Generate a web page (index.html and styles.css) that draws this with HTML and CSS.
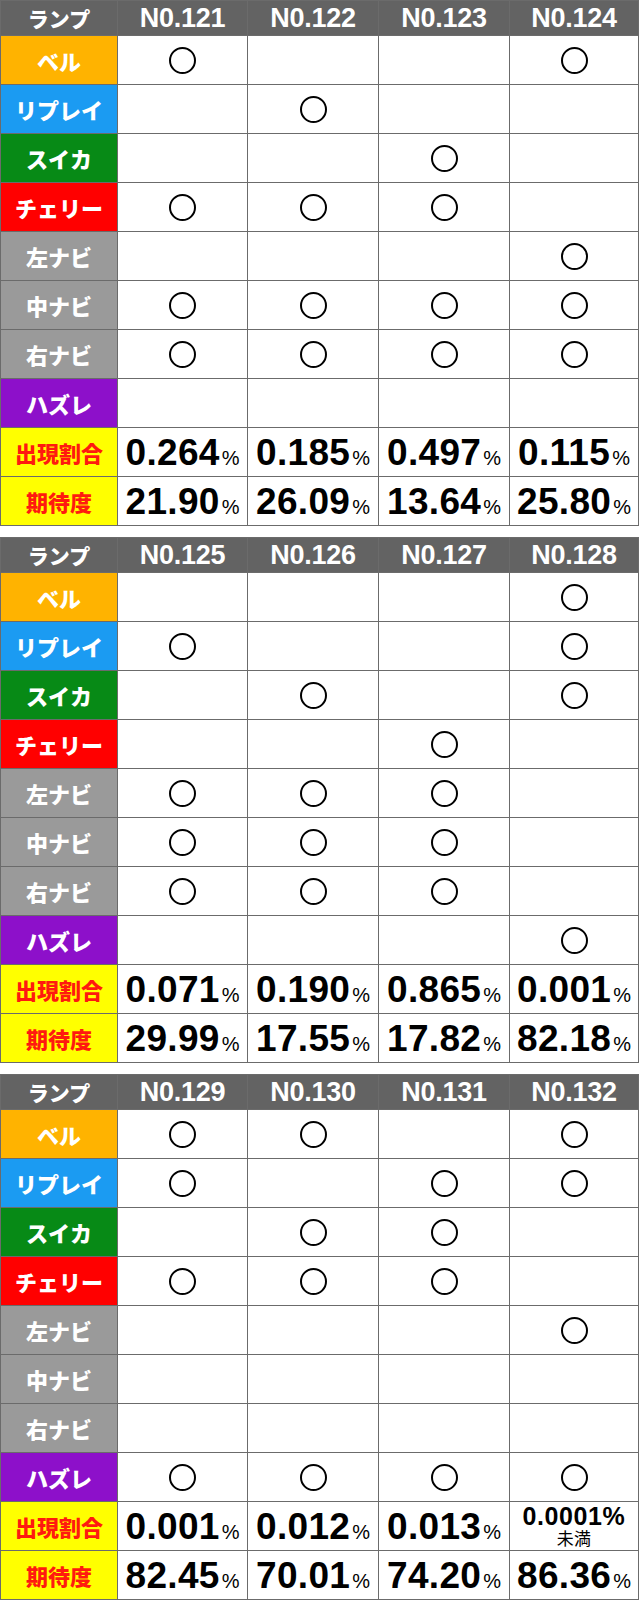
FILE: index.html
```html
<!DOCTYPE html>
<html lang="ja">
<head>
<meta charset="utf-8">
<title>ランプ</title>
<link rel="stylesheet" href="styles.css">
</head>
<body>
<table class="lamp">
  <colgroup><col class="c-label"><col class="c1"><col class="c2"><col class="c3"><col class="c4"></colgroup>
  <tr class="head"><td>ランプ</td><td>N0.121</td><td>N0.122</td><td>N0.123</td><td>N0.124</td></tr>
  <tr><td class="lb bell">ベル</td><td><span class="maru"></span></td><td></td><td></td><td><span class="maru"></span></td></tr>
  <tr><td class="lb replay">リプレイ</td><td></td><td><span class="maru"></span></td><td></td><td></td></tr>
  <tr><td class="lb suika">スイカ</td><td></td><td></td><td><span class="maru"></span></td><td></td></tr>
  <tr><td class="lb cherry">チェリー</td><td><span class="maru"></span></td><td><span class="maru"></span></td><td><span class="maru"></span></td><td></td></tr>
  <tr><td class="lb navi">左ナビ</td><td></td><td></td><td></td><td><span class="maru"></span></td></tr>
  <tr><td class="lb navi">中ナビ</td><td><span class="maru"></span></td><td><span class="maru"></span></td><td><span class="maru"></span></td><td><span class="maru"></span></td></tr>
  <tr><td class="lb navi">右ナビ</td><td><span class="maru"></span></td><td><span class="maru"></span></td><td><span class="maru"></span></td><td><span class="maru"></span></td></tr>
  <tr><td class="lb hazure">ハズレ</td><td></td><td></td><td></td><td></td></tr>
  <tr><td class="lb yellow">出現割合</td><td class="val">0.264<span class="pct">%</span></td><td class="val">0.185<span class="pct">%</span></td><td class="val">0.497<span class="pct">%</span></td><td class="val">0.115<span class="pct">%</span></td></tr>
  <tr><td class="lb yellow">期待度</td><td class="val">21.90<span class="pct">%</span></td><td class="val">26.09<span class="pct">%</span></td><td class="val">13.64<span class="pct">%</span></td><td class="val">25.80<span class="pct">%</span></td></tr>
</table>

<table class="lamp">
  <colgroup><col class="c-label"><col class="c1"><col class="c2"><col class="c3"><col class="c4"></colgroup>
  <tr class="head"><td>ランプ</td><td>N0.125</td><td>N0.126</td><td>N0.127</td><td>N0.128</td></tr>
  <tr><td class="lb bell">ベル</td><td></td><td></td><td></td><td><span class="maru"></span></td></tr>
  <tr><td class="lb replay">リプレイ</td><td><span class="maru"></span></td><td></td><td></td><td><span class="maru"></span></td></tr>
  <tr><td class="lb suika">スイカ</td><td></td><td><span class="maru"></span></td><td></td><td><span class="maru"></span></td></tr>
  <tr><td class="lb cherry">チェリー</td><td></td><td></td><td><span class="maru"></span></td><td></td></tr>
  <tr><td class="lb navi">左ナビ</td><td><span class="maru"></span></td><td><span class="maru"></span></td><td><span class="maru"></span></td><td></td></tr>
  <tr><td class="lb navi">中ナビ</td><td><span class="maru"></span></td><td><span class="maru"></span></td><td><span class="maru"></span></td><td></td></tr>
  <tr><td class="lb navi">右ナビ</td><td><span class="maru"></span></td><td><span class="maru"></span></td><td><span class="maru"></span></td><td></td></tr>
  <tr><td class="lb hazure">ハズレ</td><td></td><td></td><td></td><td><span class="maru"></span></td></tr>
  <tr><td class="lb yellow">出現割合</td><td class="val">0.071<span class="pct">%</span></td><td class="val">0.190<span class="pct">%</span></td><td class="val">0.865<span class="pct">%</span></td><td class="val">0.001<span class="pct">%</span></td></tr>
  <tr><td class="lb yellow">期待度</td><td class="val">29.99<span class="pct">%</span></td><td class="val">17.55<span class="pct">%</span></td><td class="val">17.82<span class="pct">%</span></td><td class="val">82.18<span class="pct">%</span></td></tr>
</table>

<table class="lamp">
  <colgroup><col class="c-label"><col class="c1"><col class="c2"><col class="c3"><col class="c4"></colgroup>
  <tr class="head"><td>ランプ</td><td>N0.129</td><td>N0.130</td><td>N0.131</td><td>N0.132</td></tr>
  <tr><td class="lb bell">ベル</td><td><span class="maru"></span></td><td><span class="maru"></span></td><td></td><td><span class="maru"></span></td></tr>
  <tr><td class="lb replay">リプレイ</td><td><span class="maru"></span></td><td></td><td><span class="maru"></span></td><td><span class="maru"></span></td></tr>
  <tr><td class="lb suika">スイカ</td><td></td><td><span class="maru"></span></td><td><span class="maru"></span></td><td></td></tr>
  <tr><td class="lb cherry">チェリー</td><td><span class="maru"></span></td><td><span class="maru"></span></td><td><span class="maru"></span></td><td></td></tr>
  <tr><td class="lb navi">左ナビ</td><td></td><td></td><td></td><td><span class="maru"></span></td></tr>
  <tr><td class="lb navi">中ナビ</td><td></td><td></td><td></td><td></td></tr>
  <tr><td class="lb navi">右ナビ</td><td></td><td></td><td></td><td></td></tr>
  <tr><td class="lb hazure">ハズレ</td><td><span class="maru"></span></td><td><span class="maru"></span></td><td><span class="maru"></span></td><td><span class="maru"></span></td></tr>
  <tr><td class="lb yellow">出現割合</td><td class="val">0.001<span class="pct">%</span></td><td class="val">0.012<span class="pct">%</span></td><td class="val">0.013<span class="pct">%</span></td><td class="val small"><span class="tiny">0.0001%</span><span class="miman">未満</span></td></tr>
  <tr><td class="lb yellow">期待度</td><td class="val">82.45<span class="pct">%</span></td><td class="val">70.01<span class="pct">%</span></td><td class="val">74.20<span class="pct">%</span></td><td class="val">86.36<span class="pct">%</span></td></tr>
</table>
</body>
</html>
```

FILE: styles.css
```css
html, body {
  margin: 0;
  padding: 0;
  background: #fff;
}

.lamp {
  width: 638px;
  border-collapse: collapse;
  table-layout: fixed;
  margin: 0 0 11px 0;
  font-family: "Liberation Sans", "Noto Sans CJK JP", sans-serif;
}

.c-label { width: 117px; }
.c1 { width: 130px; }
.c2 { width: 131px; }
.c3 { width: 131px; }
.c4 { width: 129px; }

.lamp td {
  border: 1px solid #6b6b6b;
  height: 48px;
  padding: 0;
  text-align: center;
  vertical-align: middle;
  line-height: 1;
}

.lamp tr.head td {
  height: 34px;
  background: #636363;
  color: #fff;
  font-weight: bold;
  font-size: 27px;
  letter-spacing: -0.3px;
}

.lamp tr.head td:first-child {
  font-family: "Noto Sans CJK JP", sans-serif;
  font-weight: 900;
  font-size: 21px;
  letter-spacing: 0;
}

.lb {
  font-family: "Noto Sans CJK JP", sans-serif;
  font-weight: 900;
  font-size: 22px;
  color: #fff;
}

.bell { background: #ffb300; }
.replay { background: #1b9bf2; }
.suika { background: #078a16; }
.cherry { background: #ff0000; }
.navi { background: #9a9a9a; }
.hazure { background: #8d10ca; }
.yellow { background: #ffff00; color: #ff1a0f; }

.maru {
  display: inline-block;
  width: 23px;
  height: 23px;
  border: 2.6px solid #000;
  border-radius: 50%;
  vertical-align: middle;
}

.val {
  font-weight: bold;
  font-size: 37px;
  color: #000;
  letter-spacing: 0.3px;
  white-space: nowrap;
}

.pct {
  font-weight: normal;
  font-size: 20px;
  margin-left: 2px;
  letter-spacing: 0;
}

.tiny {
  display: block;
  font-size: 25px;
  line-height: 23px;
  font-weight: bold;
  letter-spacing: 0.6px;
}

.miman {
  display: block;
  font-family: "Noto Sans CJK JP", sans-serif;
  font-weight: normal;
  font-size: 17px;
  line-height: 19px;
}
```
